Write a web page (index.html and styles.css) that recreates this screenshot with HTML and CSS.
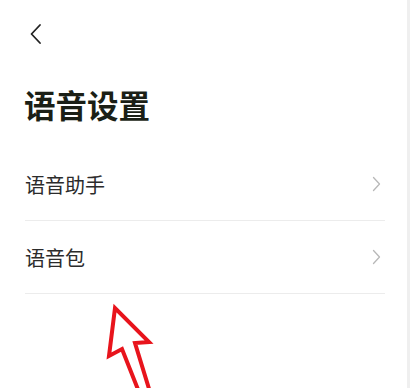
FILE: index.html
```html
<!DOCTYPE html>
<html lang="zh">
<head>
<meta charset="utf-8">
<link rel="stylesheet" href="styles.css">
</head>
<body>
<div class="screen">
  <header class="topbar">
    <svg class="back" width="14" height="22" viewBox="0 0 14 22"><path d="M11 2 L2.5 11 L11 20" fill="none" stroke="#222" stroke-width="1.8" stroke-linecap="round" stroke-linejoin="round"/></svg>
  </header>
  <h1 class="title">语音设置</h1>
  <ul class="list">
    <li class="row"><span>语音助手</span><svg class="chev" width="9" height="16" viewBox="0 0 9 16"><path d="M1.5 1.5 L7.5 8 L1.5 14.5" fill="none" stroke="#b8b8b8" stroke-width="1.3" stroke-linecap="round" stroke-linejoin="round"/></svg></li>
    <li class="row"><span>语音包</span><svg class="chev" width="9" height="16" viewBox="0 0 9 16"><path d="M1.5 1.5 L7.5 8 L1.5 14.5" fill="none" stroke="#b8b8b8" stroke-width="1.3" stroke-linecap="round" stroke-linejoin="round"/></svg></li>
  </ul>
  <svg class="arrow" width="70" height="100" viewBox="90 300 70 100"><path d="M139 392 L122 349 L109 356 L115 308 L149 342 L135 343 L150 392" fill="none" stroke="#e8141c" stroke-width="4" stroke-linejoin="miter"/></svg>
</div>
</body>
</html>
```
FILE: styles.css
```css
html, body {
  margin: 0;
  padding: 0;
  background: #fff;
  overflow: hidden;
}
body {
  font-family: "Noto Sans CJK SC", "Noto Sans", sans-serif;
  width: 411px;
  height: 388px;
}
.screen {
  position: relative;
  width: 410px;
  height: 388px;
  box-sizing: border-box;
  border-right: 3px solid #efefef;
  overflow: hidden;
}
.topbar {
  height: 68px;
  display: flex;
  align-items: center;
  padding-left: 29px;
}
.back {
  display: block;
}
.title {
  margin: 16px 0 24px 24px;
  font-size: 31.5px;
  line-height: 40px;
  font-weight: 700;
  color: #1b1f16;
}
.list {
  list-style: none;
  margin: 0 22px 0 25px;
  padding: 0;
}
.row {
  height: 72px;
  display: flex;
  align-items: center;
  justify-content: space-between;
  border-bottom: 1.5px solid #ececec;
  font-size: 20px;
  color: #2b2b2b;
  padding-right: 4px;
}
.chev {
  display: block;
}
.arrow {
  position: absolute;
  left: 90px;
  top: 300px;
}
```
